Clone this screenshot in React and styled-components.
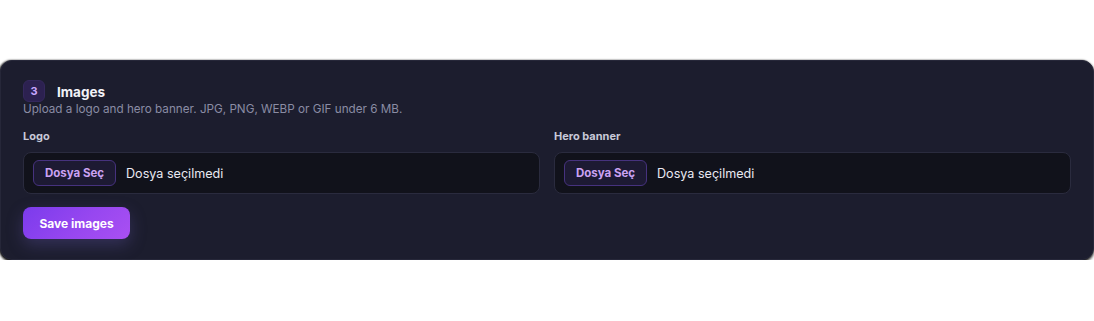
import React from "react";
import styled, { createGlobalStyle } from "styled-components";

const Global = createGlobalStyle`
  html, body { margin: 0; padding: 0; background: #ffffff; }
  body { font-family: Inter, "Noto Sans", "Liberation Sans", sans-serif; -webkit-font-smoothing: antialiased; }
`;

const Page = styled.div`
  padding-top: 60px;
  width: 1094px;
`;

const Card = styled.section`
  box-sizing: border-box;
  width: 1094px;
  height: 200px;
  background: #1c1d2e;
  border: 1px solid #262739;
  border-radius: 12px;
  padding: 19px 22px 20px;
  box-shadow: 0 2px 3px rgba(0, 0, 0, 0.85), -1px 0 2px rgba(0, 0, 0, 0.7);
`;

const Header = styled.div`
  display: flex;
  align-items: center;
  gap: 12px;
  height: 22px;
`;

const StepBadge = styled.span`
  box-sizing: border-box;
  width: 22px;
  height: 22px;
  border-radius: 6px;
  background: #2c2150;
  border: 1px solid #34285c;
  color: #c9a6ff;
  font-size: 11px;
  font-weight: 700;
  display: flex;
  align-items: center;
  justify-content: center;
`;

const Title = styled.h2`
  margin: 0;
  font-size: 13.5px;
  font-weight: 700;
  color: #f2f2f8;
  line-height: 18px;
  position: relative;
  top: 1px;
`;

const Subtitle = styled.p`
  margin: -1px 0 0;
  font-size: 11.7px;
  line-height: 16px;
  color: #8a8ca4;
`;

const Fields = styled.div`
  display: grid;
  grid-template-columns: 1fr 1fr;
  gap: 14px;
  margin-top: 12px;
`;

const Field = styled.div`
  display: flex;
  flex-direction: column;
  gap: 9px;
`;

const Label = styled.label`
  font-size: 11px;
  font-weight: 700;
  line-height: 14px;
  color: #c8c9d8;
`;

const FileBox = styled.div`
  box-sizing: border-box;
  height: 42px;
  background: #11121b;
  border: 1px solid #2a2b3e;
  border-radius: 8px;
  display: flex;
  align-items: center;
  padding: 0 9px;
  gap: 10px;
`;

const PickButton = styled.button`
  box-sizing: border-box;
  height: 26px;
  width: 83px;
  padding: 0;
  background: #1d1a33;
  border: 1px solid #46327e;
  border-radius: 6px;
  color: #cba2f3;
  font-family: inherit;
  font-size: 11.5px;
  font-weight: 700;
  cursor: pointer;
`;

const FileName = styled.span`
  font-size: 12.6px;
  color: #e9e9f2;
`;

const SaveButton = styled.button`
  margin-top: 13px;
  box-sizing: border-box;
  height: 32px;
  width: 107px;
  border: none;
  border-radius: 8px;
  background: linear-gradient(135deg, #7b3bec 0%, #9747f0 55%, #a950f2 100%);
  color: #ffffff;
  font-family: inherit;
  font-size: 12px;
  font-weight: 700;
  box-shadow: 0 6px 16px rgba(96, 86, 170, 0.35);
  cursor: pointer;
`;

function FileField({ label }) {
  return (
    <Field>
      <Label>{label}</Label>
      <FileBox>
        <PickButton type="button">Dosya Seç</PickButton>
        <FileName>Dosya seçilmedi</FileName>
      </FileBox>
    </Field>
  );
}

export default function App() {
  return (
    <Page>
      <Global />
      <Card>
        <Header>
          <StepBadge>3</StepBadge>
          <Title>Images</Title>
        </Header>
        <Subtitle>Upload a logo and hero banner. JPG, PNG, WEBP or GIF under 6 MB.</Subtitle>
        <Fields>
          <FileField label="Logo" />
          <FileField label="Hero banner" />
        </Fields>
        <SaveButton type="button">Save images</SaveButton>
      </Card>
    </Page>
  );
}
